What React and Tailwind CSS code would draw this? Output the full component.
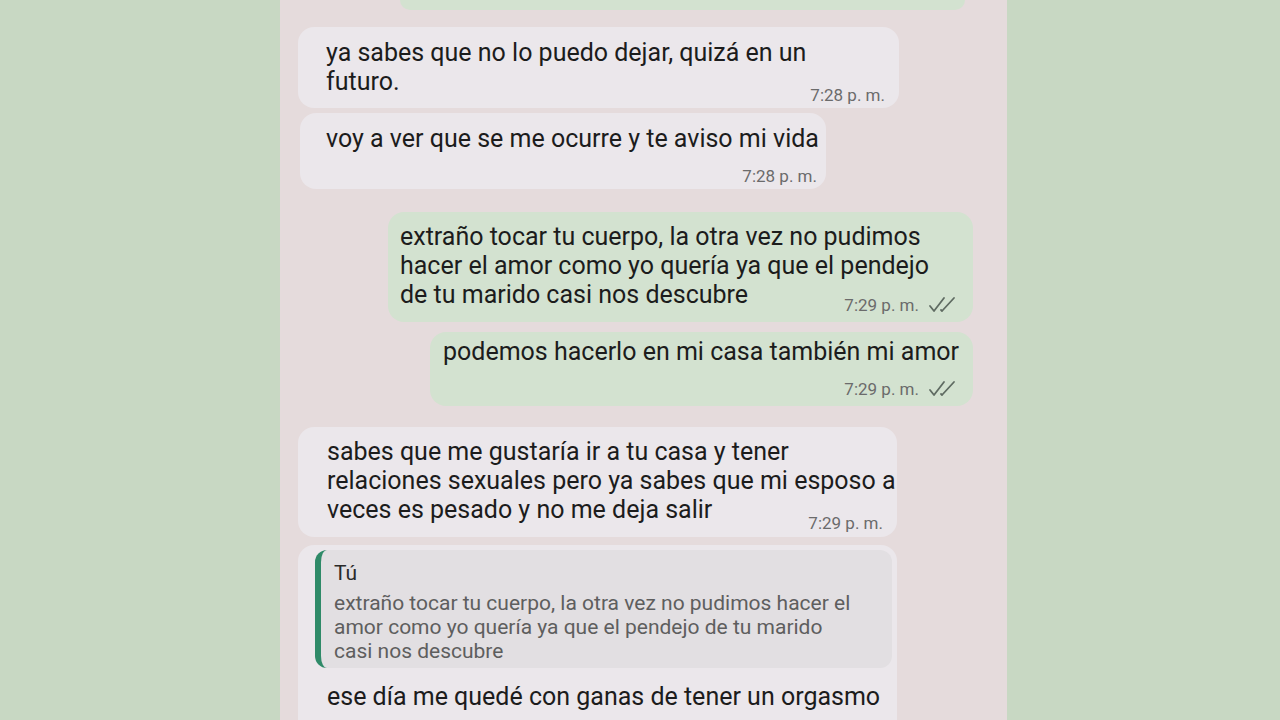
import React from "react";

const font = { fontFamily: "Roboto, 'Noto Sans', sans-serif" };

const Ticks = () => (
  <svg width="30" height="18" viewBox="0 0 30 18" className="ml-2" fill="none" stroke="#5f6b62" strokeWidth="1.8" strokeLinecap="round" strokeLinejoin="round">
    <path d="M3 10 L7 15 L17 2" />
    <path d="M14 14 L15 15 L27 2" />
  </svg>
);

const Time = ({ children, sent, className }) => (
  <div className={`flex justify-end items-center text-[17px] leading-[18px] text-[#6b6b6b] ${className}`}>
    <span>{children}</span>
    {sent && <Ticks />}
  </div>
);

export default function App() {
  return (
    <div className="w-[1280px] h-[720px] bg-[#c8d8c3] overflow-hidden" style={font}>
      <div className="ml-[280px] w-[727px] h-[720px] bg-[#e5dbdc] overflow-hidden flex flex-col items-start">
        {/* cut off sent bubble at top */}
        <div className="ml-[120px] w-[565px] h-[10px] shrink-0 bg-[#d3e2d0] rounded-b-2xl" />

        <div className="shrink-0 mt-[17px] ml-[18px] w-[601px] bg-[#ebe7eb] rounded-2xl pl-[28px] pr-[14px] pt-[11px] pb-[4px] text-[25px] leading-[29px] text-[#1c1c1c] whitespace-nowrap">
          <p>ya sabes que no lo puedo dejar, quizá en un<br />futuro.</p>
          <Time className="-mt-[10px]">7:28 p. m.</Time>
        </div>

        <div className="shrink-0 mt-[5px] ml-[20px] w-[526px] bg-[#ebe7eb] rounded-2xl pl-[26px] pr-[9px] pt-[11px] pb-[4px] text-[25px] leading-[29px] text-[#1c1c1c] whitespace-nowrap">
          <p>voy a ver que se me ocurre y te aviso mi vida</p>
          <Time className="mt-[14px]">7:28 p. m.</Time>
        </div>

        <div className="shrink-0 mt-[23px] ml-[108px] w-[585px] bg-[#d3e2d0] rounded-2xl pl-[12px] pr-[16px] pt-[10px] pb-[8px] text-[25px] leading-[29px] text-[#1c1c1c] whitespace-nowrap">
          <p>extraño tocar tu cuerpo, la otra vez no pudimos<br />hacer el amor como yo quería ya que el pendejo<br />de tu marido casi nos descubre</p>
          <Time sent className="-mt-[13px]">7:29 p. m.</Time>
        </div>

        <div className="shrink-0 mt-[10px] ml-[150px] w-[543px] bg-[#d3e2d0] rounded-2xl pl-[13px] pr-[16px] pt-[5px] pb-[8px] text-[25px] leading-[29px] text-[#1c1c1c] whitespace-nowrap">
          <p>podemos hacerlo en mi casa también mi amor</p>
          <Time sent className="mt-[14px]">7:29 p. m.</Time>
        </div>

        <div className="shrink-0 mt-[21px] ml-[18px] w-[599px] bg-[#ebe7eb] rounded-2xl pl-[29px] pr-[14px] pt-[10px] pb-[5px] text-[25px] leading-[29px] text-[#1c1c1c] whitespace-nowrap">
          <p>sabes que me gustaría ir a tu casa y tener<br />relaciones sexuales pero ya sabes que mi esposo a<br />veces es pesado y no me deja salir</p>
          <Time className="-mt-[10px]">7:29 p. m.</Time>
        </div>

        <div className="shrink-0 mt-[8px] ml-[18px] w-[599px] bg-[#ebe7eb] rounded-t-2xl pt-[5px] pb-[20px] text-[#1c1c1c] whitespace-nowrap">
          <div className="ml-[17px] mr-[5px] bg-[#e2dfe2] rounded-xl border-l-[6px] border-[#2f8a68] pl-[13px] pt-[11px] pb-[5px]">
            <div className="text-[21px] leading-[24px] text-[#2a2a2a]">Tú</div>
            <p className="mt-[6px] text-[21px] leading-[24px] text-[#5e5e5e]">extraño tocar tu cuerpo, la otra vez no pudimos hacer el<br />amor como yo quería ya que el pendejo de tu marido<br />casi nos descubre</p>
          </div>
          <p className="mt-[14px] pl-[29px] text-[25px] leading-[29px]">ese día me quedé con ganas de tener un orgasmo</p>
        </div>
      </div>
    </div>
  );
}
